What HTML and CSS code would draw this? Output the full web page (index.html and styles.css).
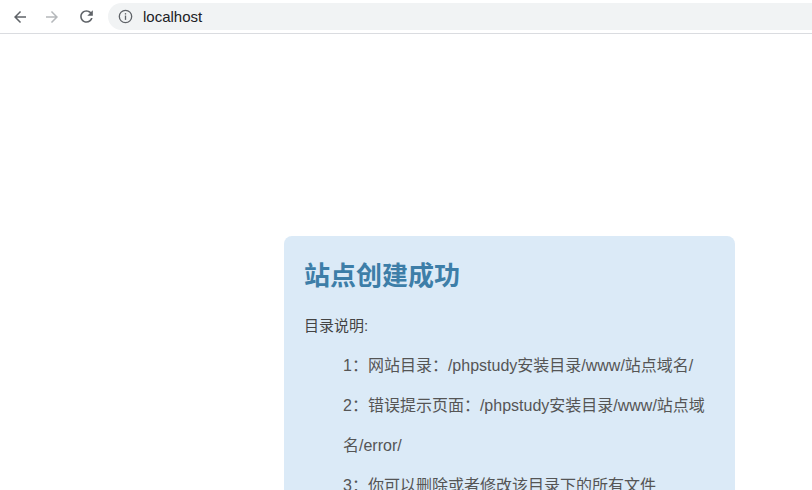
FILE: index.html
```html
<!DOCTYPE html>
<html lang="zh-CN">
<head>
<meta charset="utf-8">
<title>localhost</title>
<link rel="stylesheet" href="styles.css">
</head>
<body>
<div class="toolbar">
  <div class="nav-btn">
    <svg viewBox="0 0 24 24" width="18" height="18"><path fill="#5f6368" d="M20 11H7.83l5.59-5.59L12 4l-8 8 8 8 1.41-1.41L7.83 13H20v-2z"/></svg>
  </div>
  <div class="nav-btn">
    <svg viewBox="0 0 24 24" width="18" height="18"><path fill="#b5b8bb" d="M4 11h12.17l-5.59-5.59L12 4l8 8-8 8-1.41-1.41L16.17 13H4v-2z"/></svg>
  </div>
  <div class="nav-btn reload">
    <svg viewBox="0 0 24 24" width="19" height="19"><path fill="#5f6368" d="M17.65 6.35C16.2 4.9 14.21 4 12 4c-4.42 0-7.99 3.58-7.99 8s3.57 8 7.99 8c3.73 0 6.84-2.55 7.730-6h-2.08c-.82 2.33-3.04 4-5.65 4-3.31 0-6-2.69-6-6s2.69-6 6-6c1.66 0 3.14.69 4.22 1.78L13 11h7V4l-2.35 2.35z"/></svg>
  </div>
  <div class="omnibox">
    <svg class="info" viewBox="0 0 16 16" width="15" height="15"><circle cx="8" cy="8" r="6.6" fill="none" stroke="#5f6368" stroke-width="1.4"/><rect x="7.3" y="7" width="1.4" height="4.6" fill="#5f6368"/><rect x="7.3" y="4.4" width="1.4" height="1.5" fill="#5f6368"/></svg>
    <span class="url">localhost</span>
  </div>
</div>
<main class="page">
  <section class="card">
    <h1 class="title">站点创建成功</h1>
    <p class="lead">目录说明:</p>
    <ul class="items">
      <li>1：网站目录：/phpstudy安装目录/www/站点域名/</li>
      <li>2：错误提示页面：/phpstudy安装目录/www/站点域名/error/</li>
      <li>3：你可以删除或者修改该目录下的所有文件</li>
    </ul>
  </section>
</main>
</body>
</html>
```
FILE: styles.css
```css
html, body {
  margin: 0;
  padding: 0;
  background: #ffffff;
}
body {
  font-family: "Liberation Sans", "Noto Sans CJK SC", sans-serif;
}
.toolbar {
  height: 33px;
  border-bottom: 1px solid #dadce0;
  display: flex;
  align-items: center;
  padding-left: 4px;
  background: #ffffff;
  box-sizing: content-box;
}
.nav-btn {
  width: 32px;
  height: 28px;
  display: flex;
  align-items: center;
  justify-content: center;
}
.reload {
  margin-left: 2px;
}
.omnibox {
  margin-left: 6px;
  flex: 1;
  height: 27px;
  background: #f1f3f4;
  border-radius: 14px 0 0 14px;
  display: flex;
  align-items: center;
  padding-left: 10px;
  gap: 10px;
}
.info {
  display: block;
}
.url {
  font-family: "Liberation Sans", "Noto Sans", sans-serif;
  font-size: 15px;
  color: #202124;
}
.page {
  padding-top: 202px;
  padding-left: 284px;
}
.card {
  width: 451px;
  box-sizing: border-box;
  background: #dbeaf7;
  border-radius: 8px 8px 0 0;
  padding: 18px 20px 20px 20px;
  min-height: 260px;
}
.title {
  margin: 0;
  font-family: "Noto Sans CJK SC", sans-serif;
  font-size: 26px;
  line-height: 39px;
  font-weight: 700;
  color: #3d7ea8;
}
.lead {
  margin: 13px 0 0 0;
  font-size: 15px;
  line-height: 40px;
  color: #444;
}
.items {
  list-style: none;
  margin: 0;
  padding: 0 0 0 39px;
}
.items li {
  font-size: 16px;
  line-height: 40px;
  color: #555;
}
```
